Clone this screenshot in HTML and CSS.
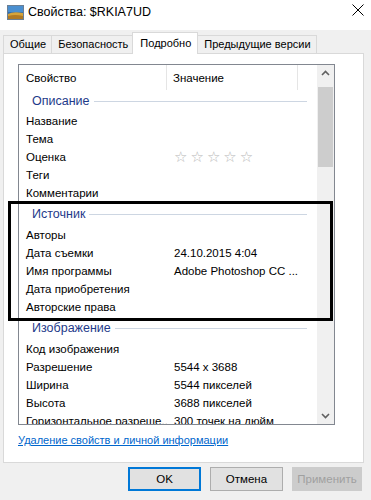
FILE: index.html
```html
<!DOCTYPE html>
<html>
<head>
<meta charset="utf-8">
<link rel="stylesheet" href="styles.css">
</head>
<body>
<div class="win">
  <div class="titlebar">
    <svg class="appicon" width="17" height="15" viewBox="0 0 17 15">
      <rect x="0.5" y="0.5" width="16" height="14" fill="#2f6fb3" stroke="#6a7f95"/>
      <rect x="1" y="1" width="15" height="6" fill="#4a8fd0"/>
      <path d="M1 9 Q6 6 16 8 L16 14 L1 14 Z" fill="#d6a43a"/>
      <path d="M1 11 Q8 9 16 11 L16 14 L1 14 Z" fill="#b07a24"/>
    </svg>
    <span class="title">Свойства: $RKIA7UD</span>
    <svg class="close" width="12" height="12" viewBox="0 0 12 12"><path d="M0.5 0.5 L11.5 11.5 M11.5 0.5 L0.5 11.5" stroke="#000" stroke-width="1"/></svg>
  </div>
  <div class="tabs">
    <div class="tab">Общие</div>
    <div class="tab">Безопасность</div>
    <div class="tab active">Подробно</div>
    <div class="tab">Предыдущие версии</div>
  </div>
  <div class="panel">
    <div class="listbox">
      <div class="list">
        <div class="head">
          <div class="hc c1">Свойство</div>
          <div class="hc c2">Значение</div>
          <div class="hc c3"></div>
        </div>
        <div class="group first"><span>Описание</span><i></i></div>
        <div class="row"><span class="n">Название</span><span class="v"></span></div>
        <div class="row"><span class="n">Тема</span><span class="v"></span></div>
        <div class="row"><span class="n">Оценка</span><span class="v stars">☆☆☆☆☆</span></div>
        <div class="row"><span class="n">Теги</span><span class="v"></span></div>
        <div class="row"><span class="n">Комментарии</span><span class="v"></span></div>
        <div class="group"><span>Источник</span><i></i></div>
        <div class="row"><span class="n">Авторы</span><span class="v"></span></div>
        <div class="row"><span class="n">Дата съемки</span><span class="v">24.10.2015 4:04</span></div>
        <div class="row"><span class="n">Имя программы</span><span class="v">Adobe Photoshop CC ...</span></div>
        <div class="row"><span class="n">Дата приобретения</span><span class="v"></span></div>
        <div class="row"><span class="n">Авторские права</span><span class="v"></span></div>
        <div class="group"><span>Изображение</span><i></i></div>
        <div class="row"><span class="n">Код изображения</span><span class="v"></span></div>
        <div class="row"><span class="n">Разрешение</span><span class="v">5544 x 3688</span></div>
        <div class="row"><span class="n">Ширина</span><span class="v">5544 пикселей</span></div>
        <div class="row"><span class="n">Высота</span><span class="v">3688 пикселей</span></div>
        <div class="row"><span class="n">Горизонтальное разреше...</span><span class="v">300 точек на дюйм</span></div>
      </div>
      <div class="scroll">
        <svg class="arr" width="17" height="17" viewBox="0 0 17 17"><path d="M5 10 L8.5 6.5 L12 10" fill="none" stroke="#606060" stroke-width="1.6"/></svg>
        <div class="track"><div class="thumb"></div></div>
        <svg class="arr" width="17" height="17" viewBox="0 0 17 17"><path d="M5 7 L8.5 10.5 L12 7" fill="none" stroke="#606060" stroke-width="1.6"/></svg>
      </div>
    </div>
    <a class="link" href="#">Удаление свойств и личной информации</a>
  </div>
  <div class="buttons">
    <div class="btn default">OK</div>
    <div class="btn">Отмена</div>
    <div class="btn disabled">Применить</div>
  </div>
  <div class="mark"></div>
</div>
</body>
</html>
```
FILE: styles.css
```css
html, body { margin: 0; padding: 0; }
body {
  width: 371px; height: 500px; overflow: hidden;
  background: #f0f0f0;
  font-family: "Liberation Sans", Arial, sans-serif;
  font-size: 11.5px; color: #000;
}
.win { position: relative; width: 371px; height: 500px; }
.titlebar {
  height: 30px; background: #fff;
  display: flex; align-items: center;
  padding-left: 7px; box-sizing: border-box;
}
.appicon { margin-top: -6px; }
.title { margin-left: 4px; font-size: 12.5px; margin-top: -6px; }
.close { margin-left: auto; margin-right: 7px; margin-top: -10px; }

.tabs {
  display: flex; align-items: flex-end;
  padding-left: 3px; height: 23px; margin-top: 0;
  font-size: 11px;
}
.tab {
  height: 18px; line-height: 17px; box-sizing: border-box;
  padding: 0 5px 0 6px; border: 1px solid #d9d9d9; border-bottom: none;
  background: #f0f0f0; margin-right: -1px;
}
.tab.active {
  height: 22px; line-height: 20px; background: #fff;
  padding: 0 6px 0 7px; position: relative; z-index: 2; margin-bottom: -1px;
  margin-left: -1px;
}
.panel {
  margin: 0 7px 0 3px; height: 410px; box-sizing: border-box;
  background: #fff; border: 1px solid #d9d9d9;
  padding: 10px 0 0 14px;
}
.listbox {
  width: 317px; height: 361px; box-sizing: border-box;
  border: 1px solid #828790; display: flex; overflow: hidden;
}
.list { width: 298px; overflow: hidden; }
.head { display: flex; height: 25px; }
.hc { box-sizing: border-box; line-height: 26px; border-right: 1px solid #e5e5e5; }
.c1 { width: 148px; padding-left: 7px; }
.c2 { width: 131px; padding-left: 6px; }
.c3 { width: 19px; border-right: none; }
.group {
  display: flex; align-items: center; height: 24px;
  padding-left: 13px; color: #1e3a8a; font-size: 12.5px;
}
.group.first { height: 22px; }
.group i { flex: 1; height: 1px; background: #cdd6e2; margin: 1px 10px 0 4px; }
.row { display: flex; height: 18px; line-height: 18px; white-space: nowrap; }
.n { width: 148px; padding-left: 7px; box-sizing: border-box; overflow: hidden; }
.v { padding-left: 7px; }
.stars { color: #b8b8b8; font-size: 15px; letter-spacing: 3px; font-family: "DejaVu Sans", sans-serif; }
.scroll { width: 17px; background: #f0f0f0; display: flex; flex-direction: column; }
.arr { display: block; flex: none; }
.track { flex: 1; padding: 5px 1px 0; }
.thumb { height: 80px; background: #cdcdcd; }
.link {
  display: inline-block; margin-top: 9px; color: #0066cc;
  text-decoration: underline; font-size: 11px;
}
.buttons { display: flex; justify-content: flex-end; gap: 9px; padding: 4px 9px 0 0; }
.btn {
  width: 73px; height: 24px; box-sizing: border-box;
  border: 1px solid #adadad; background: #e1e1e1;
  display: flex; align-items: center; justify-content: center;
}
.btn.default { border: 2px solid #0078d7; }
.btn.disabled { color: #a0a0a0; border-color: #cccccc; background: #cccccc; width: 70px; }
.mark {
  position: absolute; left: 8px; top: 201px; width: 325px; height: 120px;
  box-sizing: border-box; border: 3px solid #000;
}
```
